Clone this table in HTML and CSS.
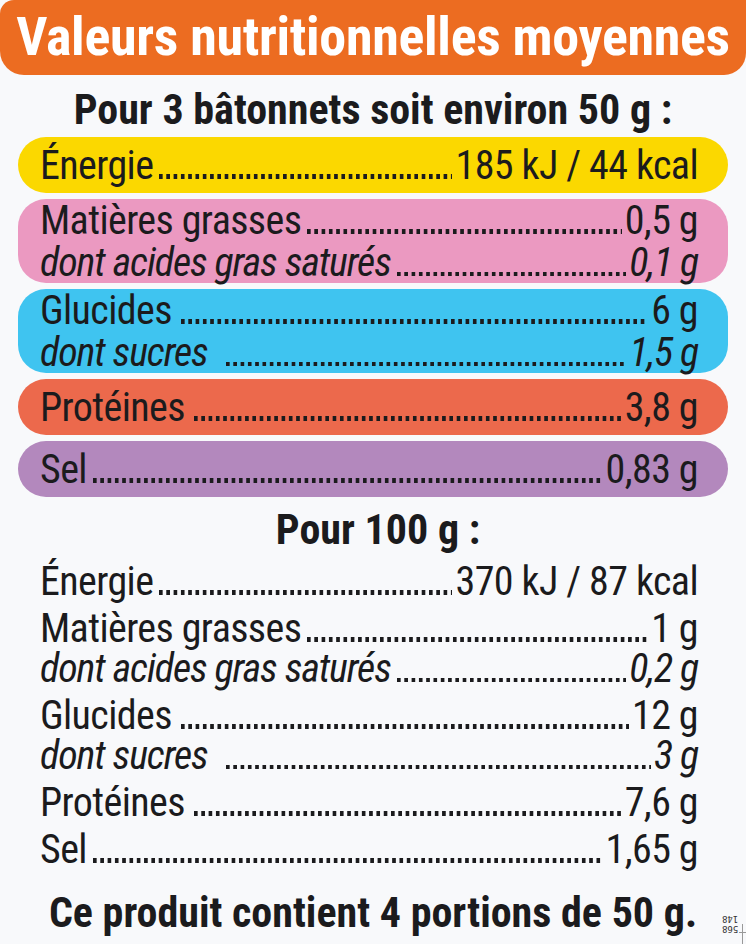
FILE: index.html
```html
<!DOCTYPE html>
<html lang="fr">
<head>
<meta charset="utf-8">
<title>Valeurs nutritionnelles moyennes</title>
<link rel="stylesheet" href="styles.css">
</head>
<body>
<div class="page">
  <header class="banner"><h1 class="banner-title">Valeurs nutritionnelles moyennes</h1></header>

  <h2 class="section-title">Pour 3 bâtonnets soit environ 50 g :</h2>
  <div class="boxes">
    <div class="box box-yellow">
      <div class="line"><span class="label">Énergie</span><span class="leader"></span><span class="value">185 kJ / 44 kcal</span></div>
    </div>
    <div class="box box-pink">
      <div class="line"><span class="label">Matières grasses</span><span class="leader"></span><span class="value">0,5 g</span></div>
      <div class="line sub"><span class="label">dont acides gras saturés</span><span class="leader"></span><span class="value">0,1 g</span></div>
    </div>
    <div class="box box-blue">
      <div class="line"><span class="label">Glucides</span><span class="leader wide"></span><span class="value">6 g</span></div>
      <div class="line sub"><span class="label">dont sucres</span><span class="leader wider"></span><span class="value">1,5 g</span></div>
    </div>
    <div class="box box-red">
      <div class="line"><span class="label">Protéines</span><span class="leader wide"></span><span class="value">3,8 g</span></div>
    </div>
    <div class="box box-purple">
      <div class="line"><span class="label">Sel</span><span class="leader"></span><span class="value">0,83 g</span></div>
    </div>
  </div>

  <h2 class="section-title second">Pour 100 g :</h2>
  <div class="plain">
    <div class="group">
      <div class="line"><span class="label">Énergie</span><span class="leader"></span><span class="value">370 kJ / 87 kcal</span></div>
    </div>
    <div class="group">
      <div class="line"><span class="label">Matières grasses</span><span class="leader"></span><span class="value">1 g</span></div>
      <div class="line sub"><span class="label">dont acides gras saturés</span><span class="leader"></span><span class="value">0,2 g</span></div>
    </div>
    <div class="group">
      <div class="line"><span class="label">Glucides</span><span class="leader wide"></span><span class="value">12 g</span></div>
      <div class="line sub"><span class="label">dont sucres</span><span class="leader wider"></span><span class="value">3 g</span></div>
    </div>
    <div class="group">
      <div class="line"><span class="label">Protéines</span><span class="leader wide"></span><span class="value">7,6 g</span></div>
    </div>
    <div class="group">
      <div class="line"><span class="label">Sel</span><span class="leader"></span><span class="value">1,65 g</span></div>
    </div>
  </div>

  <p class="footer-note">Ce produit contient 4 portions de 50 g.</p>
  <div class="code-mark"><span>568</span><span>148</span></div>
  <div class="trim-mark"></div>
</div>
</body>
</html>
```
FILE: styles.css
```css
html, body {
  margin: 0;
  padding: 0;
}
body {
  background: #f8f9fb;
  color: #1b1b1d;
  font-family: "Roboto Condensed", "Open Sans", sans-serif;
  width: 746px;
  height: 944px;
  overflow: hidden;
}
.page {
  position: relative;
  width: 746px;
  height: 944px;
}
.banner {
  height: 75px;
  background: #ec6c21;
  border-radius: 14px 0 22px 24px;
  display: flex;
  align-items: center;
  justify-content: center;
}
.banner-title {
  margin: 0;
  color: #ffffff;
  font-size: 54px;
  font-weight: 700;
  line-height: 1;
  padding-bottom: 2px;
  letter-spacing: -0.3px;
  white-space: nowrap;
}
.section-title {
  margin: 10px 0 0;
  text-align: center;
  font-size: 42px;
  font-weight: 700;
  line-height: 50px;
  height: 52px;
  white-space: nowrap;
}
.section-title.second {
  margin-top: 8px;
  padding-left: 10px;
}
.boxes {
  margin: 0 18px;
  display: flex;
  flex-direction: column;
  gap: 6px;
}
.box {
  border-radius: 28px;
  padding: 0 30px 0 22px;
  min-height: 56px;
  display: flex;
  flex-direction: column;
  justify-content: center;
}
.box-yellow { background: #fbd800; }
.box-pink { background: #eb99c1; }
.box-blue { background: #3fc4f0; }
.box-red { background: #ec694c; }
.box-purple { background: #b388bd; }
.box .line {
  height: 42px;
  line-height: 44px;
}
.line {
  display: flex;
  align-items: baseline;
  font-size: 40px;
  letter-spacing: -0.6px;
  white-space: nowrap;
}
.line.sub {
  font-style: italic;
  letter-spacing: -1.1px;
}
.leader {
  flex: 1;
  height: 5px;
  margin: 0 3px 0 6px;
  background-image: linear-gradient(to right, #1b1b1d 0, #1b1b1d 4px, transparent 4px);
  background-size: 7.3px 5px;
  background-repeat: repeat-x;
}
.leader.wide {
  margin-left: 9px;
}
.leader.wider {
  margin-left: 18px;
}
.line.sub .leader {
  height: 4px;
  background-size: 7.3px 4px;
}
.plain {
  margin: 5px 48px 0 40px;
  display: flex;
  flex-direction: column;
  gap: 7px;
}
.plain .line {
  height: 40px;
  line-height: 40px;
}
.footer-note {
  margin: 18px 0 0;
  text-align: center;
  font-size: 42px;
  font-weight: 700;
  line-height: 50px;
  white-space: nowrap;
}
.code-mark {
  position: absolute;
  right: 8px;
  bottom: 10px;
  display: flex;
  flex-direction: column;
  font-family: "DejaVu Sans Mono", monospace;
  font-size: 9px;
  line-height: 10px;
  color: #333;
  transform: rotate(180deg);
}
.trim-mark {
  position: absolute;
  right: 3px;
  bottom: 0;
  width: 1px;
  height: 20px;
  background: #999;
}
.trim-mark::after {
  content: "";
  position: absolute;
  right: -3px;
  top: 8px;
  width: 7px;
  height: 1px;
  background: #999;
}
```
